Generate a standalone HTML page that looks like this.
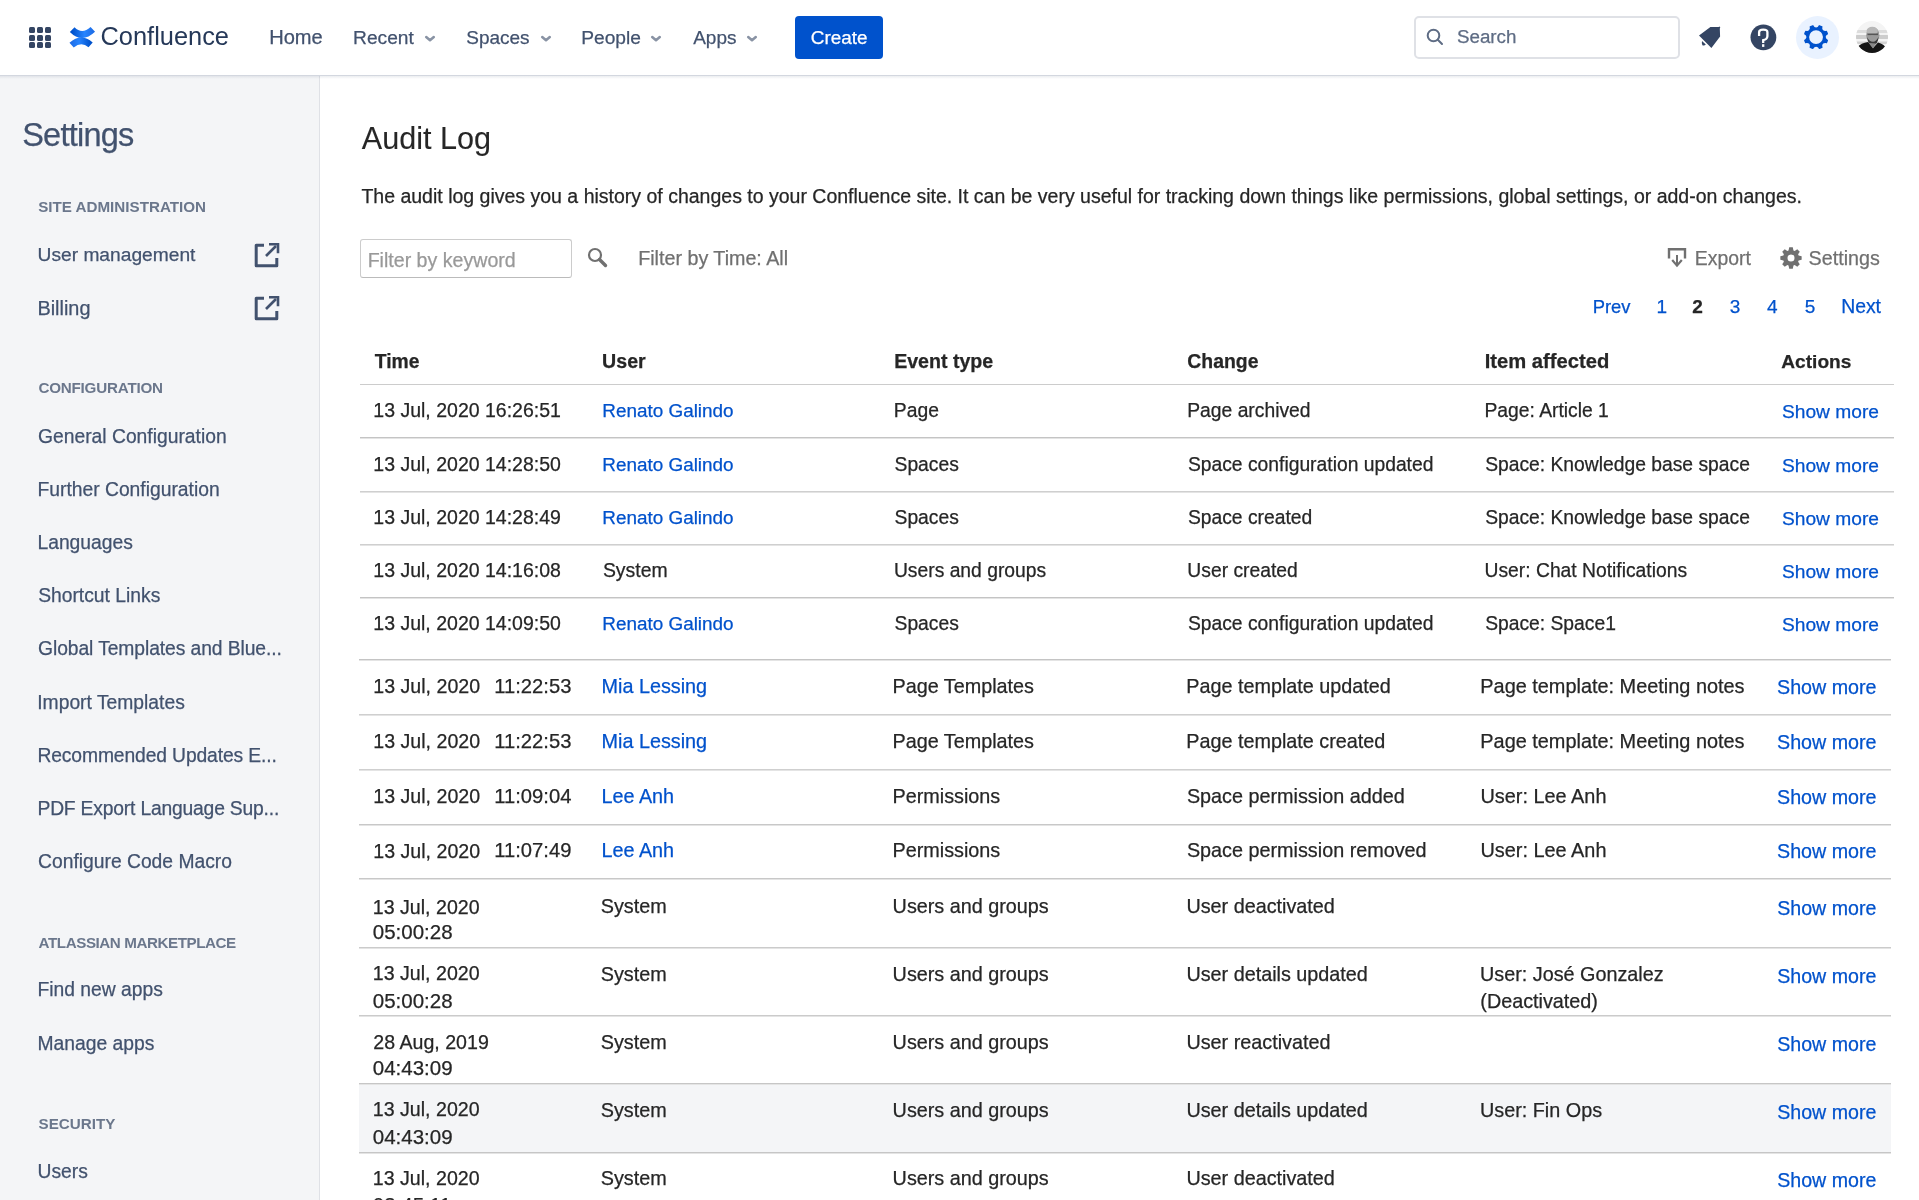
<!DOCTYPE html>
<html><head><meta charset="utf-8"><title>Audit Log - Confluence</title>
<style>
html,body{margin:0;padding:0;}
body{width:1919px;height:1200px;overflow:hidden;position:relative;background:#fff;font-family:"Liberation Sans",sans-serif;}
.t{position:absolute;white-space:nowrap;line-height:1;-webkit-text-stroke:0.25px currentColor;}
#txt{position:absolute;left:0;top:0;width:1919px;height:1200px;will-change:transform;}
.r{position:absolute;}
</style></head><body>
<div class="r" style="left:0px;top:76px;width:320px;height:1124px;background:#F4F5F7;"></div>
<div class="r" style="left:319px;top:76px;width:1px;height:1124px;background:#DFE1E6;"></div>
<div class="r" style="left:0px;top:75px;width:1919px;height:1px;background:#D3D7DF;"></div>
<div class="r" style="left:0px;top:76px;width:1919px;height:3px;background:linear-gradient(rgba(9,30,66,0.08),rgba(9,30,66,0));"></div>
<div class="r" style="left:29px;top:27.0px;width:6px;height:6px;background:#344563;border-radius:1.5px;"></div>
<div class="r" style="left:29px;top:34.5px;width:6px;height:6px;background:#344563;border-radius:1.5px;"></div>
<div class="r" style="left:29px;top:42.0px;width:6px;height:6px;background:#344563;border-radius:1.5px;"></div>
<div class="r" style="left:37px;top:27.0px;width:6px;height:6px;background:#344563;border-radius:1.5px;"></div>
<div class="r" style="left:37px;top:34.5px;width:6px;height:6px;background:#344563;border-radius:1.5px;"></div>
<div class="r" style="left:37px;top:42.0px;width:6px;height:6px;background:#344563;border-radius:1.5px;"></div>
<div class="r" style="left:45px;top:27.0px;width:6px;height:6px;background:#344563;border-radius:1.5px;"></div>
<div class="r" style="left:45px;top:34.5px;width:6px;height:6px;background:#344563;border-radius:1.5px;"></div>
<div class="r" style="left:45px;top:42.0px;width:6px;height:6px;background:#344563;border-radius:1.5px;"></div>
<svg class="r" style="left:64px;top:22px" width="35" height="31" viewBox="0 0 35 31">
<defs><linearGradient id="g1" x1="0" y1="0" x2="1" y2="0"><stop offset="0" stop-color="#0052CC"/><stop offset="0.6" stop-color="#2684FF"/><stop offset="1" stop-color="#1f6fe8"/></linearGradient>
<linearGradient id="g2" x1="0" y1="0" x2="1" y2="0"><stop offset="0" stop-color="#1f6fe8"/><stop offset="0.4" stop-color="#2684FF"/><stop offset="1" stop-color="#0052CC"/></linearGradient></defs>
<path d="M8.2 7.6 Q18 17.5 28.8 7.4" stroke="url(#g1)" stroke-width="6.6" fill="none"/>
<path d="M7.6 23.2 Q17.2 14.6 26.6 22.8" stroke="url(#g2)" stroke-width="6.4" fill="none"/>
</svg>
<svg class="r" style="left:423.5px;top:34.5px" width="12" height="8" viewBox="0 0 12 8"><path d="M2.2 2 L6 5.3 L9.8 2" stroke="#8993A4" stroke-width="2.5" fill="none" stroke-linecap="round" stroke-linejoin="round"/></svg>
<svg class="r" style="left:539.5px;top:34.5px" width="12" height="8" viewBox="0 0 12 8"><path d="M2.2 2 L6 5.3 L9.8 2" stroke="#8993A4" stroke-width="2.5" fill="none" stroke-linecap="round" stroke-linejoin="round"/></svg>
<svg class="r" style="left:650px;top:34.5px" width="12" height="8" viewBox="0 0 12 8"><path d="M2.2 2 L6 5.3 L9.8 2" stroke="#8993A4" stroke-width="2.5" fill="none" stroke-linecap="round" stroke-linejoin="round"/></svg>
<svg class="r" style="left:746px;top:34.5px" width="12" height="8" viewBox="0 0 12 8"><path d="M2.2 2 L6 5.3 L9.8 2" stroke="#8993A4" stroke-width="2.5" fill="none" stroke-linecap="round" stroke-linejoin="round"/></svg>
<div class="r" style="left:795px;top:16px;width:88px;height:43px;background:#0052CC;border-radius:4px;"></div>
<div class="r" style="left:1414px;top:16px;width:266px;height:43px;box-sizing:border-box;border:2px solid #DFE1E6;border-radius:5px;background:#fff;"></div>
<svg class="r" style="left:1426px;top:28px" width="18" height="18" viewBox="0 0 18 18"><circle cx="7.5" cy="7.5" r="5.8" stroke="#5E6C84" stroke-width="2" fill="none"/><path d="M11.8 11.8 L16 16" stroke="#5E6C84" stroke-width="2" stroke-linecap="round"/></svg>
<svg class="r" style="left:1692px;top:20px" width="35" height="35" viewBox="0 0 35 35"><path d="M18.4 7.1 L26.6 7.1 L27.6 6.6 L28.3 7.6 L27.8 8.6 L28.1 16.4 L19.4 27.9 L7 15.5 Z" fill="#344563"/><path d="M10 21 L13.8 24.6 Q12.2 26.2 10.4 25.2 Q9.4 23.6 10 21Z" fill="#344563"/></svg>
<svg class="r" style="left:1749.6px;top:24px" width="27" height="27" viewBox="0 0 27 27"><circle cx="13.4" cy="13.35" r="12.9" fill="#344563"/><path d="M9.1 12 V8.3 Q9.1 5.7 13.2 5.7 Q17.4 5.7 17.4 8.3 V12.2 Q17.2 15.4 13.2 16.2 V19" stroke="#fff" stroke-width="2.3" fill="none"/><rect x="12.05" y="20.2" width="2.3" height="2.7" fill="#fff"/></svg>
<div class="r" style="left:1795.5px;top:16px;width:43px;height:43px;background:#E9F2FF;border-radius:50%;"></div>
<svg class="r" style="left:1800.3px;top:20.8px" width="33" height="33" viewBox="0 0 24 24"><path fill="#0052CC" fill-rule="evenodd" d="M11.701 16.7a5.002 5.002 0 1 1 0-10.003 5.002 5.002 0 0 1 0 10.004m8.368-3.117a1.995 1.995 0 0 1-1.346-1.885c0-.876.563-1.613 1.345-1.885a.48.48 0 0 0 .315-.574 8.947 8.947 0 0 0-.836-1.993.477.477 0 0 0-.598-.195 2.04 2.04 0 0 1-1.29.08 1.988 1.988 0 0 1-1.404-1.395 2.04 2.04 0 0 1 .076-1.297.478.478 0 0 0-.196-.597 8.98 8.98 0 0 0-1.975-.826.479.479 0 0 0-.574.314 1.995 1.995 0 0 1-1.885 1.346 1.994 1.994 0 0 1-1.884-1.345.482.482 0 0 0-.575-.315c-.708.2-1.379.485-2.004.842a.47.47 0 0 0-.198.582A2.002 2.002 0 0 1 4.445 7.06a.478.478 0 0 0-.595.196 8.946 8.946 0 0 0-.833 1.994.48.48 0 0 0 .308.572 1.995 1.995 0 0 1 1.323 1.877c0 .867-.552 1.599-1.324 1.877a.479.479 0 0 0-.308.57 8.99 8.99 0 0 0 .723 1.79.477.477 0 0 0 .624.194c.595-.273 1.343-.264 2.104.238.117.077.225.185.302.3.527.8.512 1.581.198 2.188a.473.473 0 0 0 .168.628 8.946 8.946 0 0 0 2.11.897.474.474 0 0 0 .57-.313 1.995 1.995 0 0 1 1.886-1.353c.878 0 1.618.567 1.887 1.353a.475.475 0 0 0 .57.313 8.964 8.964 0 0 0 2.084-.883.473.473 0 0 0 .167-.631c-.318-.608-.337-1.393.191-2.195.077-.116.185-.225.302-.302.772-.511 1.527-.513 2.125-.23a.477.477 0 0 0 .628-.19 8.959 8.959 0 0 0 .71-1.793.481.481 0 0 0-.312-.574"/></svg>
<svg class="r" style="left:1856px;top:21px" width="32" height="32" viewBox="0 0 32 32"><defs><clipPath id="av"><circle cx="16" cy="16" r="16"/></clipPath></defs>
<g clip-path="url(#av)"><rect width="32" height="32" fill="#f4f4f4"/><rect y="9" width="32" height="3" fill="#dcdcdc"/><rect y="14" width="32" height="4" fill="#cdcdcd"/><rect y="20.5" width="32" height="2.5" fill="#d2d2d2"/><rect x="26" y="24" width="2" height="6" fill="#d0d0d0"/>
<ellipse cx="16.8" cy="14.2" rx="6.6" ry="8" fill="#9a9a9a"/><ellipse cx="16.2" cy="10" rx="5.6" ry="4.2" fill="#b8b8b8"/><path d="M11 16 Q12 24 17 24.5 Q22 23.5 22.5 16 Q20 21 17 20.8 Q13 20.5 11 16z" fill="#3a3a3a"/><rect x="11.5" y="12.5" width="10.5" height="1.6" fill="#555"/>
<path d="M1.5 26 Q5 22 12 21 L17 27 L22 21.5 Q28 23 30.5 27.5 L30 33 L2 33z" fill="#151515"/><path d="M13 22 L17 27.5 L20 22.5z" fill="#8a8a8a"/></g></svg>
<svg class="r" style="left:254px;top:242.5px" width="26" height="25" viewBox="0 0 26 25"><path d="M10 2.2 H2.2 V22.8 H22.8 V15" stroke="#42526E" stroke-width="3" fill="none" stroke-linejoin="round"/><path d="M12 13 L22 3" stroke="#42526E" stroke-width="2.6"/><path d="M15 1.2 H24 V10.2" stroke="#42526E" stroke-width="2.6" fill="none"/></svg>
<svg class="r" style="left:254px;top:295.5px" width="26" height="25" viewBox="0 0 26 25"><path d="M10 2.2 H2.2 V22.8 H22.8 V15" stroke="#42526E" stroke-width="3" fill="none" stroke-linejoin="round"/><path d="M12 13 L22 3" stroke="#42526E" stroke-width="2.6"/><path d="M15 1.2 H24 V10.2" stroke="#42526E" stroke-width="2.6" fill="none"/></svg>
<div class="r" style="left:360px;top:239px;width:212px;height:39px;box-sizing:border-box;border:1px solid #CCCCCC;border-bottom-color:#BBBBBB;border-radius:3px;background:#fff;"></div>
<svg class="r" style="left:587px;top:247px" width="21" height="21" viewBox="0 0 21 21"><circle cx="8" cy="8" r="6" stroke="#707070" stroke-width="2.2" fill="none"/><path d="M12.5 12.5 L18.5 18.5" stroke="#707070" stroke-width="3.4" stroke-linecap="round"/></svg>
<svg class="r" style="left:1666px;top:246px" width="22" height="22" viewBox="0 0 22 22"><path d="M3 12.6 V3.3 H19 V12.6" stroke="#707070" stroke-width="2.4" fill="none"/><path d="M11 9 V20" stroke="#707070" stroke-width="2"/><path d="M6.2 14 L11 19.6 L15.8 14" stroke="#707070" stroke-width="2.2" fill="none"/></svg>
<svg class="r" style="left:1780px;top:246.5px" width="22" height="22" viewBox="0 0 22 22"><path fill="#707070" fill-rule="evenodd" d="M8.54 3.39 L9.21 0.35 L12.79 0.35 L13.46 3.39 L14.64 3.88 L17.26 2.20 L19.80 4.74 L18.12 7.36 L18.61 8.54 L21.65 9.21 L21.65 12.79 L18.61 13.46 L18.12 14.64 L19.80 17.26 L17.26 19.80 L14.64 18.12 L13.46 18.61 L12.79 21.65 L9.21 21.65 L8.54 18.61 L7.36 18.12 L4.74 19.80 L2.20 17.26 L3.88 14.64 L3.39 13.46 L0.35 12.79 L0.35 9.21 L3.39 8.54 L3.88 7.36 L2.20 4.74 L4.74 2.20 L7.36 3.88Z M7.5 11 a3.5 3.5 0 1 0 7.0 0 a3.5 3.5 0 1 0 -7.0 0z"/></svg>
<div class="r" style="left:360px;top:384px;width:1534px;height:1px;background:#CCCCCC;"></div>
<div class="r" style="left:359px;top:1084px;width:1532px;height:68px;background:#F4F5F7;"></div>
<div class="r" style="left:360px;top:437px;width:1534px;height:1px;background:#c4c4c4;"></div>
<div class="r" style="left:360px;top:438px;width:1534px;height:1px;background:#e4e4e4;"></div>
<div class="r" style="left:360px;top:491px;width:1534px;height:1px;background:#cfcfcf;"></div>
<div class="r" style="left:360px;top:492px;width:1534px;height:1px;background:#e4e4e4;"></div>
<div class="r" style="left:360px;top:544px;width:1534px;height:1px;background:#cfcfcf;"></div>
<div class="r" style="left:360px;top:545px;width:1534px;height:1px;background:#e4e4e4;"></div>
<div class="r" style="left:360px;top:597px;width:1534px;height:1px;background:#c4c4c4;"></div>
<div class="r" style="left:360px;top:598px;width:1534px;height:1px;background:#e4e4e4;"></div>
<div class="r" style="left:359px;top:659px;width:1532px;height:1px;background:#c4c4c4;"></div>
<div class="r" style="left:359px;top:660px;width:1532px;height:1px;background:#e4e4e4;"></div>
<div class="r" style="left:359px;top:714px;width:1532px;height:1px;background:#cfcfcf;"></div>
<div class="r" style="left:359px;top:715px;width:1532px;height:1px;background:#e4e4e4;"></div>
<div class="r" style="left:359px;top:769px;width:1532px;height:1px;background:#cfcfcf;"></div>
<div class="r" style="left:359px;top:770px;width:1532px;height:1px;background:#e4e4e4;"></div>
<div class="r" style="left:359px;top:824px;width:1532px;height:1px;background:#c8c8c8;"></div>
<div class="r" style="left:359px;top:825px;width:1532px;height:1px;background:#e4e4e4;"></div>
<div class="r" style="left:359px;top:878px;width:1532px;height:1px;background:#c8c8c8;"></div>
<div class="r" style="left:359px;top:879px;width:1532px;height:1px;background:#e4e4e4;"></div>
<div class="r" style="left:359px;top:947px;width:1532px;height:1px;background:#cbcbcb;"></div>
<div class="r" style="left:359px;top:948px;width:1532px;height:1px;background:#e4e4e4;"></div>
<div class="r" style="left:359px;top:1015px;width:1532px;height:1px;background:#cbcbcb;"></div>
<div class="r" style="left:359px;top:1016px;width:1532px;height:1px;background:#e4e4e4;"></div>
<div class="r" style="left:359px;top:1083px;width:1532px;height:1px;background:#c6c6c6;"></div>
<div class="r" style="left:359px;top:1084px;width:1532px;height:1px;background:#e4e4e4;"></div>
<div class="r" style="left:359px;top:1152px;width:1532px;height:1px;background:#c6c6c6;"></div>
<div class="r" style="left:359px;top:1153px;width:1532px;height:1px;background:#e4e4e4;"></div>
<div id="txt">
<div class="t " style="left:100.53px;top:24px;font-size:25.4px;color:#253858;-webkit-text-stroke:0;">Confluence</div>
<div class="t " style="left:269.19px;top:27px;font-size:20.1px;color:#42526E;">Home</div>
<div class="t " style="left:353.06px;top:28px;font-size:19.2px;color:#42526E;">Recent</div>
<div class="t " style="left:466.25px;top:28px;font-size:19.0px;color:#42526E;">Spaces</div>
<div class="t " style="left:581.16px;top:28px;font-size:19.2px;color:#42526E;">People</div>
<div class="t " style="left:693.20px;top:28px;font-size:19.0px;color:#42526E;">Apps</div>
<div class="t " style="left:810.85px;top:29px;font-size:18.9px;color:#fff;">Create</div>
<div class="t " style="left:1456.95px;top:28px;font-size:18.8px;color:#5E6C84;">Search</div>
<div class="t " style="left:22.14px;top:119px;font-size:32.5px;color:#42526E;letter-spacing:-0.741px;">Settings</div>
<div class="t " style="left:38.14px;top:199px;font-size:15.2px;color:#6B778C;font-weight:bold;-webkit-text-stroke:0;">SITE ADMINISTRATION</div>
<div class="t " style="left:37.56px;top:245px;font-size:19.2px;color:#42526E;">User management</div>
<div class="t " style="left:37.41px;top:299px;font-size:19.9px;color:#42526E;">Billing</div>
<div class="t " style="left:38.39px;top:380px;font-size:15.2px;color:#6B778C;font-weight:bold;letter-spacing:-0.202px;-webkit-text-stroke:0;">CONFIGURATION</div>
<div class="t " style="left:38.03px;top:427px;font-size:19.3px;color:#42526E;">General Configuration</div>
<div class="t " style="left:37.46px;top:480px;font-size:19.3px;color:#42526E;">Further Configuration</div>
<div class="t " style="left:37.46px;top:533px;font-size:19.3px;color:#42526E;">Languages</div>
<div class="t " style="left:38.13px;top:586px;font-size:19.3px;color:#42526E;">Shortcut Links</div>
<div class="t " style="left:38.03px;top:639px;font-size:19.3px;color:#42526E;letter-spacing:-0.084px;">Global Templates and Blue...</div>
<div class="t " style="left:37.26px;top:693px;font-size:19.3px;color:#42526E;">Import Templates</div>
<div class="t " style="left:37.46px;top:746px;font-size:19.3px;color:#42526E;letter-spacing:-0.123px;">Recommended Updates E...</div>
<div class="t " style="left:37.46px;top:799px;font-size:19.3px;color:#42526E;letter-spacing:-0.187px;">PDF Export Language Sup...</div>
<div class="t " style="left:38.03px;top:852px;font-size:19.3px;color:#42526E;">Configure Code Macro</div>
<div class="t " style="left:38.62px;top:935px;font-size:15.2px;color:#6B778C;font-weight:bold;letter-spacing:-0.443px;-webkit-text-stroke:0;">ATLASSIAN MARKETPLACE</div>
<div class="t " style="left:37.46px;top:980px;font-size:19.3px;color:#42526E;">Find new apps</div>
<div class="t " style="left:37.46px;top:1034px;font-size:19.3px;color:#42526E;">Manage apps</div>
<div class="t " style="left:38.54px;top:1116px;font-size:15.2px;color:#6B778C;font-weight:bold;-webkit-text-stroke:0;">SECURITY</div>
<div class="t " style="left:37.55px;top:1162px;font-size:19.3px;color:#42526E;">Users</div>
<div class="t " style="left:361.80px;top:123px;font-size:30.6px;color:#262626;-webkit-text-stroke:0.1px currentColor;">Audit Log</div>
<div class="t " style="left:361.41px;top:187px;font-size:19.5px;color:#262626;">The audit log gives you a history of changes to your Confluence site. It can be very useful for tracking down things like permissions, global settings, or add-on changes.</div>
<div class="t " style="left:367.63px;top:251px;font-size:19.6px;color:#999999;">Filter by keyword</div>
<div class="t " style="left:638.22px;top:249px;font-size:19.7px;color:#707070;">Filter by Time: All</div>
<div class="t " style="left:1694.85px;top:249px;font-size:19.4px;color:#707070;">Export</div>
<div class="t " style="left:1808.61px;top:249px;font-size:19.7px;color:#707070;">Settings</div>
<div class="t " style="left:1592.63px;top:298px;font-size:18.4px;color:#0052CC;">Prev</div>
<div class="t " style="left:1656.38px;top:297px;font-size:19px;color:#0052CC;">1</div>
<div class="t " style="left:1692.13px;top:297px;font-size:19px;color:#262626;font-weight:bold;">2</div>
<div class="t " style="left:1729.74px;top:297px;font-size:19px;color:#0052CC;">3</div>
<div class="t " style="left:1767.12px;top:297px;font-size:19px;color:#0052CC;">4</div>
<div class="t " style="left:1804.64px;top:297px;font-size:19px;color:#0052CC;">5</div>
<div class="t " style="left:1841.15px;top:297px;font-size:19.4px;color:#0052CC;">Next</div>
<div class="t " style="left:374.81px;top:352px;font-size:19.3px;color:#262626;font-weight:bold;">Time</div>
<div class="t " style="left:602.12px;top:352px;font-size:19.6px;color:#262626;font-weight:bold;">User</div>
<div class="t " style="left:894.13px;top:352px;font-size:19.6px;color:#262626;font-weight:bold;">Event type</div>
<div class="t " style="left:1187.32px;top:352px;font-size:19.4px;color:#262626;font-weight:bold;">Change</div>
<div class="t " style="left:1484.69px;top:351px;font-size:20.2px;color:#262626;font-weight:bold;">Item affected</div>
<div class="t " style="left:1781.32px;top:352px;font-size:19.1px;color:#262626;font-weight:bold;">Actions</div>
<div class="t " style="left:373.34px;top:401px;font-size:19.5px;color:#262626;">13 Jul, 2020 16:26:51</div>
<div class="t " style="left:602.29px;top:402px;font-size:18.9px;color:#0052CC;">Renato Galindo</div>
<div class="t " style="left:893.86px;top:401px;font-size:19.3px;color:#262626;">Page</div>
<div class="t " style="left:1187.26px;top:401px;font-size:19.3px;color:#262626;">Page archived</div>
<div class="t " style="left:1484.46px;top:401px;font-size:19.3px;color:#262626;">Page: Article 1</div>
<div class="t " style="left:1781.94px;top:402px;font-size:19.2px;color:#0052CC;">Show more</div>
<div class="t " style="left:373.34px;top:455px;font-size:19.5px;color:#262626;">13 Jul, 2020 14:28:50</div>
<div class="t " style="left:602.29px;top:456px;font-size:18.9px;color:#0052CC;">Renato Galindo</div>
<div class="t " style="left:894.53px;top:455px;font-size:19.3px;color:#262626;">Spaces</div>
<div class="t " style="left:1187.93px;top:455px;font-size:19.3px;color:#262626;">Space configuration updated</div>
<div class="t " style="left:1485.13px;top:455px;font-size:19.3px;color:#262626;">Space: Knowledge base space</div>
<div class="t " style="left:1781.94px;top:456px;font-size:19.2px;color:#0052CC;">Show more</div>
<div class="t " style="left:373.34px;top:508px;font-size:19.5px;color:#262626;">13 Jul, 2020 14:28:49</div>
<div class="t " style="left:602.29px;top:509px;font-size:18.9px;color:#0052CC;">Renato Galindo</div>
<div class="t " style="left:894.53px;top:508px;font-size:19.3px;color:#262626;">Spaces</div>
<div class="t " style="left:1187.93px;top:508px;font-size:19.3px;color:#262626;">Space created</div>
<div class="t " style="left:1485.13px;top:508px;font-size:19.3px;color:#262626;">Space: Knowledge base space</div>
<div class="t " style="left:1781.94px;top:509px;font-size:19.2px;color:#0052CC;">Show more</div>
<div class="t " style="left:373.34px;top:561px;font-size:19.5px;color:#262626;">13 Jul, 2020 14:16:08</div>
<div class="t " style="left:602.93px;top:561px;font-size:19.4px;color:#262626;">System</div>
<div class="t " style="left:893.95px;top:561px;font-size:19.3px;color:#262626;">Users and groups</div>
<div class="t " style="left:1187.35px;top:561px;font-size:19.3px;color:#262626;">User created</div>
<div class="t " style="left:1484.55px;top:561px;font-size:19.3px;color:#262626;">User: Chat Notifications</div>
<div class="t " style="left:1781.94px;top:562px;font-size:19.2px;color:#0052CC;">Show more</div>
<div class="t " style="left:373.34px;top:614px;font-size:19.5px;color:#262626;">13 Jul, 2020 14:09:50</div>
<div class="t " style="left:602.29px;top:615px;font-size:18.9px;color:#0052CC;">Renato Galindo</div>
<div class="t " style="left:894.53px;top:614px;font-size:19.3px;color:#262626;">Spaces</div>
<div class="t " style="left:1187.93px;top:614px;font-size:19.3px;color:#262626;">Space configuration updated</div>
<div class="t " style="left:1485.13px;top:614px;font-size:19.3px;color:#262626;">Space: Space1</div>
<div class="t " style="left:1781.94px;top:615px;font-size:19.2px;color:#0052CC;">Show more</div>
<div class="t " style="left:373.33px;top:677px;font-size:19.6px;color:#262626;">13 Jul, 2020</div>
<div class="t " style="left:494.29px;top:676px;font-size:20.2px;color:#262626;">11:22:53</div>
<div class="t " style="left:601.52px;top:677px;font-size:19.8px;color:#0052CC;">Mia Lessing</div>
<div class="t " style="left:892.52px;top:677px;font-size:19.8px;color:#262626;">Page Templates</div>
<div class="t " style="left:1186.22px;top:677px;font-size:19.8px;color:#262626;">Page template updated</div>
<div class="t " style="left:1480.31px;top:677px;font-size:19.9px;color:#262626;">Page template: Meeting notes</div>
<div class="t " style="left:1777.01px;top:678px;font-size:19.7px;color:#0052CC;">Show more</div>
<div class="t " style="left:373.33px;top:732px;font-size:19.6px;color:#262626;">13 Jul, 2020</div>
<div class="t " style="left:494.29px;top:731px;font-size:20.2px;color:#262626;">11:22:53</div>
<div class="t " style="left:601.52px;top:732px;font-size:19.8px;color:#0052CC;">Mia Lessing</div>
<div class="t " style="left:892.52px;top:732px;font-size:19.8px;color:#262626;">Page Templates</div>
<div class="t " style="left:1186.22px;top:732px;font-size:19.8px;color:#262626;">Page template created</div>
<div class="t " style="left:1480.31px;top:732px;font-size:19.9px;color:#262626;">Page template: Meeting notes</div>
<div class="t " style="left:1777.01px;top:733px;font-size:19.7px;color:#0052CC;">Show more</div>
<div class="t " style="left:373.33px;top:787px;font-size:19.6px;color:#262626;">13 Jul, 2020</div>
<div class="t " style="left:494.29px;top:786px;font-size:20.2px;color:#262626;">11:09:04</div>
<div class="t " style="left:601.52px;top:787px;font-size:19.8px;color:#0052CC;">Lee Anh</div>
<div class="t " style="left:892.52px;top:787px;font-size:19.8px;color:#262626;">Permissions</div>
<div class="t " style="left:1186.91px;top:787px;font-size:19.8px;color:#262626;">Space permission added</div>
<div class="t " style="left:1480.41px;top:787px;font-size:19.9px;color:#262626;">User: Lee Anh</div>
<div class="t " style="left:1777.01px;top:788px;font-size:19.7px;color:#0052CC;">Show more</div>
<div class="t " style="left:373.33px;top:842px;font-size:19.6px;color:#262626;">13 Jul, 2020</div>
<div class="t " style="left:494.29px;top:840px;font-size:20.2px;color:#262626;">11:07:49</div>
<div class="t " style="left:601.52px;top:841px;font-size:19.8px;color:#0052CC;">Lee Anh</div>
<div class="t " style="left:892.52px;top:841px;font-size:19.8px;color:#262626;">Permissions</div>
<div class="t " style="left:1186.91px;top:841px;font-size:19.8px;color:#262626;">Space permission removed</div>
<div class="t " style="left:1480.41px;top:841px;font-size:19.9px;color:#262626;">User: Lee Anh</div>
<div class="t " style="left:1777.01px;top:842px;font-size:19.7px;color:#0052CC;">Show more</div>
<div class="t " style="left:372.83px;top:898px;font-size:19.6px;color:#262626;">13 Jul, 2020</div>
<div class="t " style="left:372.78px;top:922px;font-size:20.5px;color:#262626;">05:00:28</div>
<div class="t " style="left:600.71px;top:897px;font-size:19.8px;color:#262626;">System</div>
<div class="t " style="left:892.61px;top:897px;font-size:19.8px;color:#262626;">Users and groups</div>
<div class="t " style="left:1186.41px;top:897px;font-size:19.8px;color:#262626;">User deactivated</div>
<div class="t " style="left:1777.22px;top:899px;font-size:19.6px;color:#0052CC;">Show more</div>
<div class="t " style="left:372.83px;top:964px;font-size:19.6px;color:#262626;">13 Jul, 2020</div>
<div class="t " style="left:372.78px;top:991px;font-size:20.5px;color:#262626;">05:00:28</div>
<div class="t " style="left:600.71px;top:965px;font-size:19.8px;color:#262626;">System</div>
<div class="t " style="left:892.61px;top:965px;font-size:19.8px;color:#262626;">Users and groups</div>
<div class="t " style="left:1186.41px;top:965px;font-size:19.8px;color:#262626;">User details updated</div>
<div class="t " style="left:1480.02px;top:965px;font-size:19.8px;color:#262626;">User: José Gonzalez</div>
<div class="t " style="left:1480.31px;top:992px;font-size:19.8px;color:#262626;">(Deactivated)</div>
<div class="t " style="left:1777.22px;top:967px;font-size:19.6px;color:#0052CC;">Show more</div>
<div class="t " style="left:373.32px;top:1033px;font-size:19.6px;color:#262626;">28 Aug, 2019</div>
<div class="t " style="left:372.78px;top:1058px;font-size:20.5px;color:#262626;">04:43:09</div>
<div class="t " style="left:600.71px;top:1033px;font-size:19.8px;color:#262626;">System</div>
<div class="t " style="left:892.61px;top:1033px;font-size:19.8px;color:#262626;">Users and groups</div>
<div class="t " style="left:1186.41px;top:1033px;font-size:19.8px;color:#262626;">User reactivated</div>
<div class="t " style="left:1777.22px;top:1035px;font-size:19.6px;color:#0052CC;">Show more</div>
<div class="t " style="left:372.83px;top:1100px;font-size:19.6px;color:#262626;">13 Jul, 2020</div>
<div class="t " style="left:372.78px;top:1127px;font-size:20.5px;color:#262626;">04:43:09</div>
<div class="t " style="left:600.71px;top:1101px;font-size:19.8px;color:#262626;">System</div>
<div class="t " style="left:892.61px;top:1101px;font-size:19.8px;color:#262626;">Users and groups</div>
<div class="t " style="left:1186.41px;top:1101px;font-size:19.8px;color:#262626;">User details updated</div>
<div class="t " style="left:1480.02px;top:1101px;font-size:19.8px;color:#262626;">User: Fin Ops</div>
<div class="t " style="left:1777.22px;top:1103px;font-size:19.6px;color:#0052CC;">Show more</div>
<div class="t " style="left:372.83px;top:1169px;font-size:19.6px;color:#262626;">13 Jul, 2020</div>
<div class="t " style="left:372.78px;top:1195px;font-size:20.5px;color:#262626;">03:45:11</div>
<div class="t " style="left:600.71px;top:1169px;font-size:19.8px;color:#262626;">System</div>
<div class="t " style="left:892.61px;top:1169px;font-size:19.8px;color:#262626;">Users and groups</div>
<div class="t " style="left:1186.41px;top:1169px;font-size:19.8px;color:#262626;">User deactivated</div>
<div class="t " style="left:1777.22px;top:1171px;font-size:19.6px;color:#0052CC;">Show more</div>
</div>
</body></html>
